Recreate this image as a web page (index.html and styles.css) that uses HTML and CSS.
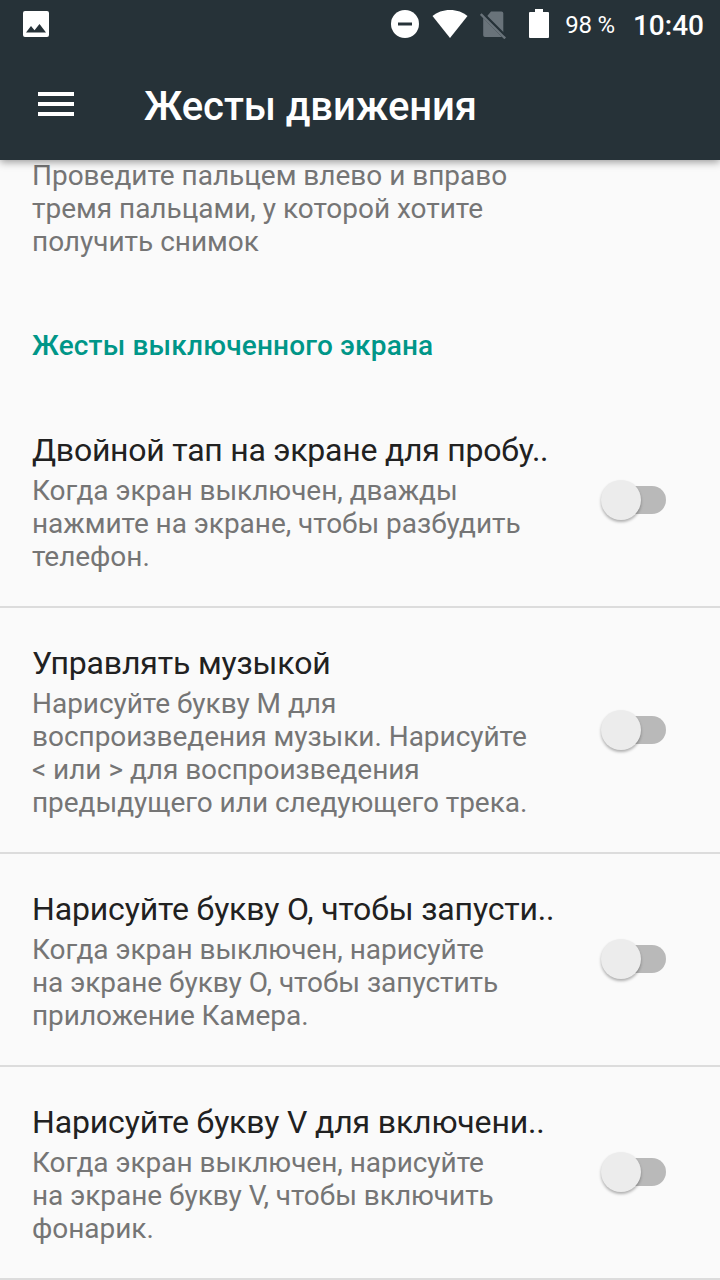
FILE: index.html
```html
<!DOCTYPE html>
<html lang="ru">
<head>
    <meta charset="UTF-8">
    <meta name="viewport" content="width=device-width, initial-scale=1.0">
    <title>Жесты движения</title>
    <link rel="stylesheet" href="styles.css">
</head>
<body>
    <div class="screen">
        <header class="header">
            <!-- Status bar -->
            <div class="status-bar">
                <svg class="icon-picture" width="28" height="28" viewBox="0 0 28 28">
                    <path fill="#fff" fill-rule="evenodd" d="M3 1h22a2 2 0 0 1 2 2v22a2 2 0 0 1-2 2H3a2 2 0 0 1-2-2V3a2 2 0 0 1 2-2zM4 22.500h20l-6.500-8.500-5 6.300-3.500-4.300z"/>
                </svg>
                <svg class="icon-dnd" width="28" height="28" viewBox="0 0 28 28">
                    <circle cx="14" cy="14" r="14" fill="#fff"/>
                    <path fill="#263238" d="M7 12.500h14v3H7z"/>
                </svg>
                <svg class="icon-wifi" width="36" height="28" viewBox="0 0 36 28">
                    <path fill="#fff" d="M18 28L.5 6C5 2.200 11 0 18 0s13 2.200 17.500 6z"/>
                </svg>
                <svg class="icon-sim" width="26" height="29" viewBox="0 0 26 29">
                    <path fill="#69737a" d="M11 1.500h10.500a1.800 1.800 0 0 1 1.800 1.800V23L7 6.200zM3.200 8L22 27H5a1.800 1.800 0 0 1-1.800-1.800z"/>
                    <path stroke="#69737a" stroke-width="2.400" d="M.8 4l24.400 24.400"/>
                    <path stroke="#263238" stroke-width="1.800" d="M5 5l20 20"/>
                </svg>
                <svg class="icon-battery" width="20" height="30" viewBox="0 0 20 30">
                    <path fill="#fff" d="M6 0h8v3h5a1 1 0 0 1 1 1v24a1 1 0 0 1-1 1H1a1 1 0 0 1-1-1V4a1 1 0 0 1 1-1h5z"/>
                </svg>
                <span class="battery-level">98 %</span>
                <span class="clock">10:40</span>
            </div>
            <!-- Toolbar -->
            <div class="toolbar">
                <button class="menu-button" aria-label="Меню">
                    <span></span><span></span><span></span>
                </button>
                <h1>Жесты движения</h1>
            </div>
        </header>

        <main class="content">
            <p class="summary summary-first">Проведите пальцем влево и вправо<br>тремя пальцами, у которой хотите<br>получить снимок</p>
            <h2>Жесты выключенного экрана</h2>

            <div class="item">
                <div class="item-text">
                    <h3 class="tight">Двойной тап на экране для пробу..</h3>
                    <p class="summary">Когда экран выключен, дважды<br>нажмите на экране, чтобы разбудить<br>телефон.</p>
                </div>
                <button class="switch" role="switch" aria-checked="false"></button>
            </div>
            <div class="item">
                <div class="item-text">
                    <h3>Управлять музыкой</h3>
                    <p class="summary">Нарисуйте букву M для<br>воспроизведения музыки. Нарисуйте<br>&lt; или &gt; для воспроизведения<br>предыдущего или следующего трека.</p>
                </div>
                <button class="switch" role="switch" aria-checked="false"></button>
            </div>
            <div class="item">
                <div class="item-text">
                    <h3>Нарисуйте букву O, чтобы запусти..</h3>
                    <p class="summary">Когда экран выключен, нарисуйте<br>на экране букву O, чтобы запустить<br>приложение Камера.</p>
                </div>
                <button class="switch" role="switch" aria-checked="false"></button>
            </div>
            <div class="item">
                <div class="item-text">
                    <h3>Нарисуйте букву V для включени..</h3>
                    <p class="summary">Когда экран выключен, нарисуйте<br>на экране букву V, чтобы включить<br>фонарик.</p>
                </div>
                <button class="switch" role="switch" aria-checked="false"></button>
            </div>
        </main>
    </div>
</body>
</html>
```
FILE: styles.css
```css
* {
    box-sizing: border-box;
}
body {
    margin: 0;
    font-family: Roboto, sans-serif;
    background: #fafafa;
}
h1, h2, h3, p {
    margin: 0;
}
button {
    padding: 0;
    border: none;
    background: none;
}
.screen {
    width: 720px;
    height: 1280px;
    overflow: hidden;
}
.header {
    position: relative;
    height: 160px;
    background: #263238;
    color: #fff;
    box-shadow: 0 2px 8px rgba(0, 0, 0, 0.4);
}
.status-bar {
    display: flex;
    align-items: center;
    height: 48px;
    padding: 0 16px 0 22px;
}
.icon-dnd {
    margin-left: auto;
}
.icon-wifi {
    margin-left: 13px;
}
.icon-sim {
    margin-left: 12px;
}
.icon-battery {
    margin-left: 23px;
}
.battery-level {
    margin-left: 16px;
    padding-top: 2px;
    font-size: 24px;
    letter-spacing: -0.2px;
    white-space: nowrap;
}
.clock {
    margin-left: 18px;
    padding-top: 2px;
    font-size: 28px;
    font-weight: 500;
}
.toolbar {
    display: flex;
    align-items: center;
    height: 112px;
    padding-left: 38px;
}
.menu-button {
    display: flex;
    flex-direction: column;
    gap: 6px;
    width: 36px;
}
.menu-button span {
    height: 4px;
    background: #fff;
}
h1 {
    margin-left: 70px;
    padding-top: 4px;
    font-size: 40px;
    font-weight: 500;
    letter-spacing: -0.07px;
}
.summary {
    font-size: 28px;
    line-height: 33px;
    letter-spacing: -0.04px;
    color: #757575;
    white-space: nowrap;
}
.summary-first {
    margin: -1px 0 0 32px;
    letter-spacing: -0.02px;
}
h2 {
    margin: 71px 0 33px 32px;
    font-size: 28px;
    line-height: 33px;
    font-weight: 500;
    letter-spacing: 0.18px;
    color: #009688;
}
.item {
    display: flex;
    align-items: center;
    justify-content: space-between;
    padding: 0 54px 0 32px;
    border-bottom: 2px solid #dcdcdc;
}
.item-text {
    padding: 36px 0 33px;
}
h3 {
    margin-bottom: 5px;
    font-size: 32px;
    line-height: 38px;
    font-weight: 400;
    letter-spacing: -0.15px;
    color: #212121;
    white-space: nowrap;
}
h3.tight {
    letter-spacing: -0.24px;
}
.switch {
    position: relative;
    width: 64px;
    height: 28px;
    margin-bottom: 1px;
    border-radius: 14px;
    background: #b9b9b9;
}
.switch::before {
    content: "";
    position: absolute;
    top: -6px;
    left: -1px;
    width: 40px;
    height: 40px;
    border-radius: 50%;
    background: #ececec;
    box-shadow: 0 2px 3px rgba(0, 0, 0, 0.3);
}
```
